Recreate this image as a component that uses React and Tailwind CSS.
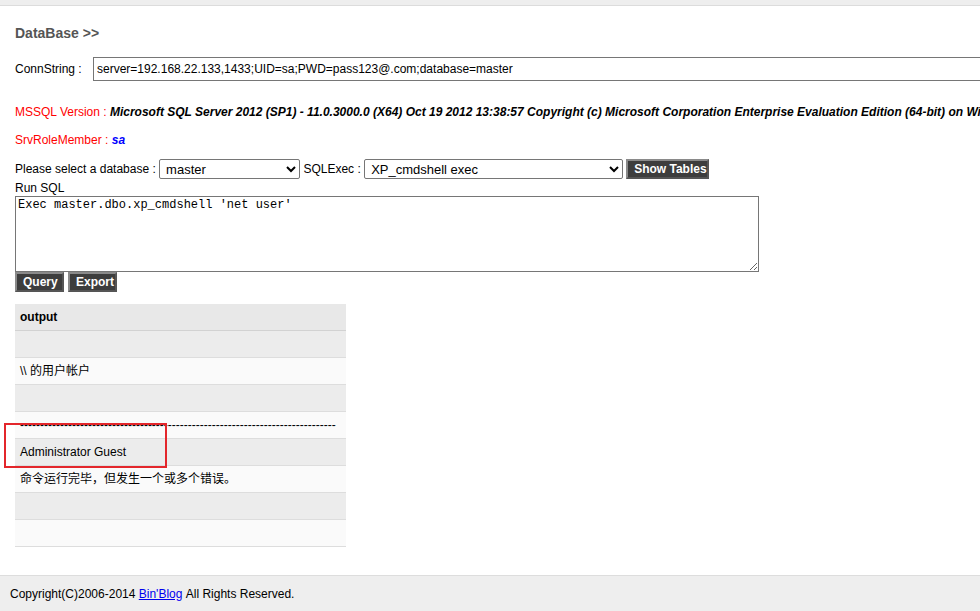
import { useState } from 'react'

const rows = [
  '',
  '\\\\ 的用户帐户',
  '',
  '-------------------------------------------------------------------------------',
  'Administrator Guest',
  '命令运行完毕，但发生一个或多个错误。',
  '',
  '',
]

function DarkButton({ children, className = '' }) {
  return (
    <button
      className={`h-[20px] px-[6px] bg-[#3d3d3d] text-white font-bold text-[12px] leading-none border-2 border-[#8a8a8a] border-r-[#555] border-b-[#555] ${className}`}
    >
      {children}
    </button>
  )
}

export default function App() {
  const [sql, setSql] = useState("Exec master.dbo.xp_cmdshell 'net user'")

  return (
    <div className="min-h-screen flex flex-col bg-white text-[12px] text-black overflow-hidden font-['Liberation_Sans','Noto_Sans_CJK_SC',Arial,sans-serif]">
      <div className="h-[6px] bg-[#eeeeee] border-b border-[#dcdcdc]" />

      <main className="flex-1 pl-[15px]">
        <h2 className="mt-[19px] text-[14px] leading-[16px] font-bold text-[#555]">DataBase &gt;&gt;</h2>

        <div className="mt-[16px] flex items-center whitespace-nowrap">
          <span className="w-[78px] shrink-0">ConnString :</span>
          <input
            className="h-[24px] w-[900px] shrink-0 border border-[#767676] px-[3px] text-[12px]"
            defaultValue="server=192.168.22.133,1433;UID=sa;PWD=pass123@.com;database=master"
          />
        </div>

        <p className="mt-[24px] leading-[14px] whitespace-nowrap">
          <span className="text-[#ff0000]">MSSQL Version : </span>
          <span className="font-bold italic">
            Microsoft SQL Server 2012 (SP1) - 11.0.3000.0 (X64) Oct 19 2012 13:38:57 Copyright (c) Microsoft Corporation Enterprise Evaluation Edition (64-bit) on Windows NT 6.1 &lt;X64&gt; (Build 7601: Service Pack 1)
          </span>
        </p>

        <p className="mt-[14px] leading-[14px] whitespace-nowrap">
          <span className="text-[#ff0000]">SrvRoleMember : </span>
          <span className="font-bold italic text-[#0000ff]">sa</span>
        </p>

        <div className="mt-[12px] flex items-center whitespace-nowrap">
          <span>Please select a database :&nbsp;</span>
          <select className="h-[20px] w-[141px] border border-[#767676] rounded-[2px] text-[13px] pl-[2px]">
            <option>master</option>
            <option>tempdb</option>
            <option>model</option>
            <option>msdb</option>
          </select>
          <span>&nbsp;SQLExec :&nbsp;</span>
          <select className="h-[20px] w-[259px] border border-[#767676] rounded-[2px] text-[13px] pl-[2px]">
            <option>XP_cmdshell exec</option>
            <option>Add xp_cmdshell</option>
            <option>Add sp_oacreate</option>
          </select>
          <DarkButton className="ml-[3px] w-[83px]">Show Tables</DarkButton>
        </div>

        <p className="mt-[1px] leading-[16px]">Run SQL</p>
        <textarea
          className="block w-[744px] h-[76px] border border-[#767676] px-[2px] py-[1px] text-[12px] leading-[14px] font-['Liberation_Mono','Courier_New',monospace]"
          value={sql}
          onChange={(e) => setSql(e.target.value)}
        />
        <div className="flex gap-[4px]">
          <DarkButton className="w-[49px]">Query</DarkButton>
          <DarkButton className="w-[49px]">Export</DarkButton>
        </div>

        <div className="relative mt-[12px] w-[331px]">
          <div className="h-[27px] flex items-center pl-[5px] bg-[#e8e8e8] border-b border-[#d2d2d2] font-bold">
            output
          </div>
          {rows.map((r, i) => (
            <div
              key={i}
              className={`h-[27px] flex items-center pl-[5px] border-b border-[#dddddd] whitespace-nowrap overflow-hidden ${
                i % 2 === 0 ? 'bg-[#ececec]' : 'bg-[#fafafa]'
              }`}
            >
              {r}
            </div>
          ))}
          <div className="absolute left-[-11px] top-[119px] w-[163px] h-[45px] border-2 border-[#e3262b]" />
        </div>
      </main>

      <footer className="h-[36px] flex items-center pl-[10px] bg-[#eeeeee] border-t border-[#dddddd] whitespace-nowrap">
        Copyright(C)2006-2014&nbsp;
        <a href="#" className="text-[#0000ee] underline">Bin'Blog</a>
        &nbsp;All Rights Reserved.
      </footer>
    </div>
  )
}
